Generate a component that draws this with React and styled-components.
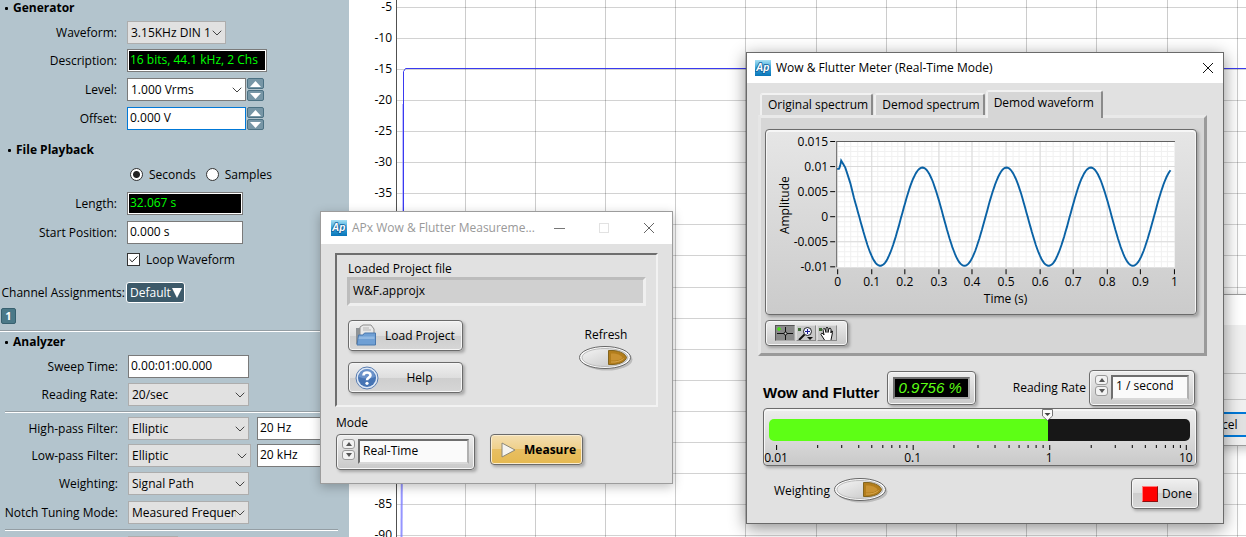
import { useState } from 'react';
import styled, { createGlobalStyle, css } from 'styled-components';
import { ChevronDown, Check } from 'lucide-react';

const GlobalStyle = createGlobalStyle`
  * {
    box-sizing: border-box;
  }
  body {
    margin: 0;
    overflow: hidden;
    background: #ffffff;
  }
  body, button, input, select {
    font-family: "Open Sans", "Noto Sans", sans-serif;
    font-size: 12px;
    line-height: 16px;
    color: #000000;
  }
  button, input, select {
    margin: 0;
    padding: 0;
  }
`;

/* ---------- side panel ---------- */

function Picker({ id, options, width, tone }) {
  return (
    <PickerBox $width={width} $tone={tone}>
      <select id={id}>
        {options.map((option) => (
          <option key={option}>{option}</option>
        ))}
      </select>
      <ChevronDown size={16} strokeWidth={1.5} color="#444444" />
    </PickerBox>
  );
}

function UpDown({ label }) {
  return (
    <Stepper>
      <StepButton aria-label={`${label} up`}>
        <svg width="11" height="6" viewBox="0 0 11 6"><path d="M0 6L5.5 0L11 6Z" fill="#fff" /></svg>
      </StepButton>
      <StepButton aria-label={`${label} down`}>
        <svg width="11" height="6" viewBox="0 0 11 6"><path d="M0 0L5.5 6L11 0Z" fill="#fff" /></svg>
      </StepButton>
    </Stepper>
  );
}

function SettingsPanel() {
  return (
    <Sidebar>
      <SectionTitle>Generator</SectionTitle>
      <Row $gap={0}>
        <label htmlFor="waveform">Waveform:</label>
        <Picker id="waveform" options={['3.15KHz DIN 1']} width={99} />
      </Row>
      <Row $gap={5}>
        <label htmlFor="description">Description:</label>
        <Readout id="description" readOnly value="16 bits, 44.1 kHz, 2 Chs" $width={140} />
      </Row>
      <Row>
        <label htmlFor="level">Level:</label>
        <Inline>
          <Picker id="level" options={['1.000 Vrms']} width={119} tone="white" />
          <UpDown label="Level" />
        </Inline>
      </Row>
      <Row>
        <label htmlFor="offset">Offset:</label>
        <Inline>
          <Field id="offset" defaultValue="0.000 V" $width={119} $active />
          <UpDown label="Offset" />
        </Inline>
      </Row>

      <SectionTitle $indent>File Playback</SectionTitle>
      <Row $gap={0}>
        <span />
        <Choices>
          <label><Radio type="radio" name="unit" defaultChecked />Seconds</label>
          <label><Radio type="radio" name="unit" />Samples</label>
        </Choices>
      </Row>
      <Row>
        <label htmlFor="length">Length:</label>
        <Readout id="length" readOnly value="32.067 s" $width={116} />
      </Row>
      <Row>
        <label htmlFor="start">Start Position:</label>
        <Field id="start" defaultValue="0.000 s" $width={116} />
      </Row>
      <Row $gap={4}>
        <span />
        <TickLabel>
          <TickBox>
            <input type="checkbox" defaultChecked />
            <Check size={11} strokeWidth={2} />
          </TickBox>
          Loop Waveform
        </TickLabel>
      </Row>
      <Row $gap={10} $wide>
        <label htmlFor="channels">Channel Assignments:</label>
        <DefaultButton id="channels">
          Default
          <svg width="10" height="10" viewBox="0 0 10 10"><path d="M0 0H10L5 10Z" fill="#fff" /></svg>
        </DefaultButton>
      </Row>
      <ChannelBadge>1</ChannelBadge>

      <Rule $top={6} $bottom={0} $full />
      <SectionTitle>Analyzer</SectionTitle>
      <AnalyzerRows>
        <Row $gap={0}>
          <label htmlFor="sweep">Sweep Time:</label>
          <Field id="sweep" defaultValue="0.00:01:00.000" $width={121} />
        </Row>
        <Row $gap={5}>
          <label htmlFor="rate">Reading Rate:</label>
          <Picker id="rate" options={['20/sec']} width={121} />
        </Row>
        <Rule $top={5} $bottom={4} />
        <Row $gap={0}>
          <label htmlFor="highpass">High-pass Filter:</label>
          <Inline $gap={8}>
            <Picker id="highpass" options={['Elliptic']} width={121} />
            <Field aria-label="High-pass frequency" defaultValue="20 Hz" $width={78} />
          </Inline>
        </Row>
        <Row $gap={4}>
          <label htmlFor="lowpass">Low-pass Filter:</label>
          <Inline $gap={6}>
            <Picker id="lowpass" options={['Elliptic']} width={123} />
            <Field aria-label="Low-pass frequency" defaultValue="20 kHz" $width={78} />
          </Inline>
        </Row>
        <Row $gap={5}>
          <label htmlFor="weighting">Weighting:</label>
          <Picker id="weighting" options={['Signal Path']} width={121} />
        </Row>
        <Row>
          <label htmlFor="notch">Notch Tuning Mode:</label>
          <Picker id="notch" options={['Measured Frequen']} width={121} />
        </Row>
        <Rule $top={5} $bottom={5} />
        <Row $gap={0}>
          <span />
          <Picker id="more" options={['']} width={50} />
        </Row>
      </AnalyzerRows>
    </Sidebar>
  );
}

/* ---------- level chart ---------- */

const levels = Array.from({ length: 18 }, (_, i) => -5 * (i + 1));
const columns = Array.from({ length: 60 }, (_, i) => 116 + Math.floor(i * 70.2));

function LevelChart() {
  return (
    <ChartArea>
      <svg width="100%" height="100%">
        {levels.map((level, i) => {
          const y = Math.round(7 + i * 31.06) + 0.5;
          return (
            <g key={level}>
              <line x1="48" x2="100%" y1={y} y2={y} stroke="#d2d2d2" />
              <text x="43" y={y + 3.5} textAnchor="end">{level}</text>
            </g>
          );
        })}
        {columns.map((x) => (
          <line key={x} x1={x + 0.5} x2={x + 0.5} y1="0" y2="100%" stroke="#000" strokeOpacity="0.2" />
        ))}
        <line x1="47.5" x2="47.5" y1="0" y2="100%" stroke="#505050" />
        <path d="M53.5 212V104" stroke="#8080ff" strokeOpacity="0.5" fill="none" />
        <path d="M52.5 540L54 212" stroke="#7a7aff" strokeWidth="2" strokeOpacity="0.8" fill="none" />
        <path d="M54.5 212V71.500L56.500 68.500H1600" stroke="#3a3af0" fill="none" />
      </svg>
    </ChartArea>
  );
}

/* ---------- shared dialog parts ---------- */

function AppLogo() {
  return (
    <svg width="16" height="16" viewBox="0 0 16 16" aria-hidden="true">
      <defs>
        <linearGradient id="logoFill" x1="0" y1="0" x2="0" y2="1">
          <stop offset="0" stopColor="#a8e0f4" />
          <stop offset="0.5" stopColor="#35a5da" />
          <stop offset="1" stopColor="#0874b8" />
        </linearGradient>
      </defs>
      <rect width="16" height="16" fill="url(#logoFill)" />
      <text x="1" y="11" fontFamily="Liberation Sans, sans-serif" fontSize="10" fontWeight="700" fontStyle="italic" fill="#fff" stroke="#12609c" strokeWidth="1.600" paintOrder="stroke">Ap</text>
    </svg>
  );
}

function Toggle({ id }) {
  return (
    <ToggleBox>
      <input type="checkbox" id={id} />
      <svg width="54" height="25" viewBox="0 0 54 25">
        <defs>
          <linearGradient id="pillFill" x1="0" y1="0" x2="1" y2="1">
            <stop offset="0" stopColor="#f4f4f4" />
            <stop offset="1" stopColor="#c4c4c4" />
          </linearGradient>
        </defs>
        <ellipse cx="28" cy="13.500" rx="25.500" ry="11" fill="#000" opacity="0.16" />
        <ellipse cx="26" cy="11.500" rx="25.500" ry="11" fill="#fafafa" stroke="#666" />
        <ellipse cx="26" cy="11.500" rx="23" ry="9" fill="url(#pillFill)" stroke="#bbb" />
        <path d="M29.500 4.500H34C42 5 46.500 8.500 47.500 11.500C46.500 15 42 18 34 18.500H29.500Z" fill="#b27d1c" stroke="#83651f" />
        <path d="M32 7.500H35C40 8 42.500 10 43.500 11.500C42 13.500 39 15 32 14.500Z" fill="#c99232" />
        <path d="M32 16H36C40 15.500 43 14 44.500 12.500" fill="none" stroke="#d9a850" />
      </svg>
    </ToggleBox>
  );
}

function RingControl({ id, options, width }) {
  return (
    <Ring $width={width}>
      <RingSteps>
        <button aria-label="Previous"><svg width="6" height="4" viewBox="0 0 6 4"><path d="M0 4L3 0L6 4Z" fill="#555" /></svg></button>
        <button aria-label="Next"><svg width="6" height="4" viewBox="0 0 6 4"><path d="M0 0L3 4L6 0Z" fill="#555" /></svg></button>
      </RingSteps>
      <select id={id}>
        {options.map((option) => (
          <option key={option}>{option}</option>
        ))}
      </select>
    </Ring>
  );
}

function FolderIcon() {
  return (
    <svg width="22" height="23" viewBox="0 0 22 23">
      <path d="M1 4H7V20H1Z" fill="#8f9396" />
      <path d="M5 3L8 1H16L19 5V12H5Z" fill="#e9e9e9" stroke="#8d8d8d" />
      <path d="M8 4H14M8 6H16" stroke="#b5b5b5" />
      <path d="M2 21L3.500 11H8L9.500 9H20.500V21Z" fill="#6f9fd4" stroke="#4b78ad" />
      <path d="M4 12.500H19.500V15H3.500Z" fill="#9fc3e8" opacity="0.7" />
    </svg>
  );
}

function HelpIcon() {
  return (
    <svg width="24" height="24" viewBox="0 0 24 24">
      <circle cx="12" cy="12" r="11" fill="#dfe9f6" stroke="#5a7db0" />
      <circle cx="12" cy="12" r="9" fill="#4674b4" />
      <path d="M4 11A8 8 0 0 1 20 11Q12 14 4 11Z" fill="#7ba0d3" opacity="0.7" />
      <path d="M8.500 9.500C8.500 5.500 15.500 5.500 15.500 9.300C15.500 11.700 12 11.600 12 14.200" fill="none" stroke="#fff" strokeWidth="2.600" />
      <circle cx="12" cy="17.300" r="1.600" fill="#fff" />
    </svg>
  );
}

/* ---------- measurement window ---------- */

function MeasurementWindow() {
  return (
    <Window $left={320} $top={211} $width={353}>
      <TitleBar $height={32} $muted>
        <AppLogo />
        <h2>APx Wow &amp; Flutter Measureme...</h2>
        <WindowButton aria-label="Minimize">
          <svg width="11" height="11"><path d="M0 5.500H11" stroke="#777" /></svg>
        </WindowButton>
        <WindowButton aria-label="Maximize" disabled>
          <svg width="11" height="11"><rect x="0.500" y="0.500" width="9" height="9" fill="none" stroke="#e2e2e2" /></svg>
        </WindowButton>
        <WindowButton aria-label="Close">
          <svg width="12" height="12"><path d="M1 1L11 11M11 1L1 11" stroke="#666" /></svg>
        </WindowButton>
      </TitleBar>
      <MeasureBody>
        <Groove>
          <label htmlFor="project">Loaded Project file</label>
          <SunkenField id="project" readOnly value="W&F.approjx" />
          <ProjectActions>
            <ButtonStack>
              <BevelButton><FolderIcon /><span>Load Project</span></BevelButton>
              <BevelButton $spread><HelpIcon /><span>Help</span></BevelButton>
            </ButtonStack>
            <RefreshBlock>
              <label htmlFor="refresh">Refresh</label>
              <Toggle id="refresh" />
            </RefreshBlock>
          </ProjectActions>
        </Groove>
        <ModeLabel htmlFor="mode">Mode</ModeLabel>
        <ModeRow>
          <RingControl id="mode" options={['Real-Time']} width={139} />
          <BevelButton $gold>
            <svg width="15" height="16" viewBox="0 0 15 16"><path d="M1 1L14 8L1 15Z" fill="#f5f3ee" stroke="#8c8878" /></svg>
            <span>Measure</span>
          </BevelButton>
        </ModeRow>
      </MeasureBody>
    </Window>
  );
}

/* ---------- meter window ---------- */

const plotX = (t) => 71 + t * 336;
const plotY = (v) => 86.5 - v * 5000;

function buildWave() {
  const points = [
    [0, 0.0095], [0.006, 0.0096], [0.009, 0.0102], [0.012, 0.0112],
    [0.018, 0.0105], [0.024, 0.0098], [0.031, 0.0084], [0.039, 0.0067],
  ];
  for (let t = 0.05; t <= 0.992; t += 0.004) {
    points.push([t, 0.0098 * Math.cos(2 * Math.PI * 4 * (t - 0.003))]);
  }
  return points.map(([t, v]) => `${plotX(t).toFixed(1)},${plotY(v).toFixed(1)}`).join(' ');
}

const timeMarks = Array.from({ length: 11 }, (_, i) => i / 10);
const amplitudeMarks = [0.015, 0.01, 0.005, 0, -0.005, -0.01];

function WaveGraph() {
  return (
    <GraphFrame>
      <svg width="100%" viewBox="0 0 429 184">
        <rect x="70" y="11" width="338" height="126" fill="#fff" />
        {Array.from({ length: 51 }, (_, i) => Math.round(71 + i * 6.72) + 0.5).map((x) => (
          <line key={x} x1={x} x2={x} y1="12" y2="137" stroke="#f1f1f1" />
        ))}
        {Array.from({ length: 25 }, (_, i) => 11.5 + i * 5).map((y) => (
          <line key={y} x1="71" x2="408" y1={y} y2={y} stroke="#f1f1f1" />
        ))}
        {timeMarks.map((t) => {
          const x = Math.round(plotX(t)) + 0.5;
          return (
            <g key={t}>
              {t > 0 && t < 1 && <line x1={x} x2={x} y1="12" y2="137" stroke="#dadada" />}
              <line x1={x} x2={x} y1="139" y2="144" stroke="#000" />
              <text x={x} y="156" textAnchor="middle">{t}</text>
            </g>
          );
        })}
        {amplitudeMarks.map((v) => {
          const y = Math.round(plotY(v) - 0.5) + 0.5;
          return (
            <g key={v}>
              {v < 0.015 && v > -0.01 && <line x1="71" x2="408" y1={y} y2={y} stroke="#dadada" />}
              <line x1="64" x2="69" y1={y} y2={y} stroke="#000" />
              <text x="62" y={y + 4} textAnchor="end">{v}</text>
            </g>
          );
        })}
        <path d="M70.500 137V11.500H408" fill="none" stroke="#606060" />
        <polyline points={buildWave()} fill="none" stroke="#0a62a5" strokeWidth="1.900" />
        <text x="239" y="173" textAnchor="middle">Time (s)</text>
        <text transform="translate(23 75) rotate(-90)" textAnchor="middle">Amplitude</text>
      </svg>
    </GraphFrame>
  );
}

function GraphPalette() {
  return (
    <Palette>
      <PaletteButton aria-label="Cursor" $pressed>
        <svg width="18" height="15" viewBox="0 0 18 15">
          <path d="M1 7.500H17M9.500 1V14" stroke="#111" />
          <circle cx="9.500" cy="7.500" r="1.500" fill="#ccc" stroke="#111" />
          <path d="M1 3H5M3 1V5" stroke="#4ae01a" strokeWidth="1.500" />
        </svg>
      </PaletteButton>
      <PaletteButton aria-label="Zoom">
        <svg width="18" height="15" viewBox="0 0 18 15">
          <rect x="1" y="2" width="3" height="3" fill="#3f6b35" />
          <circle cx="10.500" cy="5.500" r="4" fill="#f0f4ff" stroke="#222" />
          <path d="M8 5.500H13M10.500 3V8" stroke="#1a1a90" />
          <path d="M7.500 8.500L2 14" stroke="#111" strokeWidth="2" />
          <path d="M10 11H16L13 14Z" fill="#111" />
        </svg>
      </PaletteButton>
      <PaletteButton aria-label="Pan">
        <svg width="18" height="15" viewBox="0 0 18 15">
          <rect x="1" y="2" width="3" height="3" fill="#3f6b35" />
          <path d="M6.500 14L3 8.500Q3 6.500 5 7.500L6 9L5 3.500Q5.500 1.500 7 3L8 6.500V2Q9 .5 10 2V6.500L11 2.500Q12.500 1.500 13 3V7L13.500 5Q15 4.500 14.500 6.500L13 14" fill="#fff" stroke="#111" />
        </svg>
      </PaletteButton>
    </Palette>
  );
}

const decade = 136.3;
const decades = ['0.01', '0.1', '1', '10'];

function MeterScale() {
  return (
    <MeterPanel>
      <MeterBar type="range" aria-label="Wow and Flutter level" min="0" max="420" defaultValue="279" />
      <MeterThumb width="11" height="12" viewBox="0 0 11 12">
        <path d="M0.500 0.500H10.500V7L5.500 11.500L0.500 7Z" fill="#fafafa" stroke="#777" />
        <path d="M2.500 4H8.500L5.500 7Z" fill="#444" />
      </MeterThumb>
      <svg width="100%" viewBox="0 0 431 24">
        {decades.map((name, i) => (
          <g key={name}>
            <line x1={12.5 + i * decade} x2={12.5 + i * decade} y1="4" y2="9" stroke="#000" />
            <text x={12 + i * decade} y="21" textAnchor="middle">{name}</text>
            {i < 3 && [2, 3, 4, 5, 6, 7, 8, 9].map((n) => {
              const x = Math.round(12 + decade * (i + Math.log10(n))) + 0.5;
              return <line key={n} x1={x} x2={x} y1="4" y2="7" stroke="#000" />;
            })}
          </g>
        ))}
      </svg>
    </MeterPanel>
  );
}

const tabs = ['Original spectrum', 'Demod spectrum', 'Demod waveform'];

function MeterWindow() {
  const [tab, setTab] = useState(tabs[2]);

  return (
    <Window $left={746} $top={52} $width={478} $dark>
      <TitleBar $height={30}>
        <AppLogo />
        <h2>Wow &amp; Flutter Meter (Real-Time Mode)</h2>
        <WindowButton aria-label="Close">
          <svg width="12" height="12"><path d="M1 1L11 11M11 1L1 11" stroke="#111" /></svg>
        </WindowButton>
      </TitleBar>
      <MeterBody>
        <TabList role="tablist">
          {tabs.map((name) => (
            <Tab key={name} role="tab" aria-selected={name === tab} $active={name === tab} onClick={() => setTab(name)}>
              {name}
            </Tab>
          ))}
        </TabList>
        <TabPanel>
          <WaveGraph />
          <GraphPalette />
        </TabPanel>
        <ReadingRow>
          <h3>Wow and Flutter</h3>
          <ValueFrame><output>0.9756 %</output></ValueFrame>
          <RateBlock>
            <label htmlFor="meter-rate">Reading Rate</label>
            <RingControl id="meter-rate" options={['1 / second']} width={106} />
          </RateBlock>
        </ReadingRow>
        <MeterScale />
        <FooterRow>
          <WeightingBlock>
            <label htmlFor="meter-weighting">Weighting</label>
            <Toggle id="meter-weighting" />
          </WeightingBlock>
          <BevelButton $compact><StopSquare /><span>Done</span></BevelButton>
        </FooterRow>
      </MeterBody>
    </Window>
  );
}

function BackWindow() {
  return (
    <Window $left={1060} $top={294} $width={240}>
      <TitleBar $height={30} />
      <BackBody>
        <BackField />
        <CancelButton>Cancel</CancelButton>
      </BackBody>
    </Window>
  );
}

export default function App() {
  return (
    <Desktop>
      <GlobalStyle />
      <SettingsPanel />
      <LevelChart />
      <BackWindow />
      <MeasurementWindow />
      <MeterWindow />
    </Desktop>
  );
}

const Desktop = styled.main`
  position: relative;
  display: flex;
  height: 100vh;
  overflow: hidden;
`;

const Sidebar = styled.section`
  flex: 0 0 349px;
  margin-top: -2px;
  background: #b3c4cd;
`;

const SectionTitle = styled.h2`
  display: flex;
  align-items: center;
  height: 20px;
  margin: ${({ $indent }) => ($indent ? '10px 0 3px 8px' : '0 0 3px 5px')};
  font-size: 12px;
  font-weight: 700;

  &::before {
    content: '';
    width: 3px;
    height: 3px;
    margin-right: 5px;
    border-radius: 1px;
    background: #000000;
  }
`;

const Row = styled.div`
  display: grid;
  grid-template-columns: ${({ $wide }) => ($wide ? '125px' : '117px')} auto;
  column-gap: ${({ $wide }) => ($wide ? '1px' : '10px')};
  align-items: center;
  justify-content: start;
  height: 23px;
  margin-top: ${({ $gap = 6 }) => $gap}px;

  > label:first-child {
    justify-self: end;
    white-space: nowrap;
  }
`;

const AnalyzerRows = styled.div`
  padding-left: 1px;
`;

const Inline = styled.div`
  display: flex;
  gap: ${({ $gap = 1 }) => $gap}px;
`;

const PickerBox = styled.div`
  display: grid;
  align-items: center;
  width: ${({ $width }) => $width}px;
  height: 23px;
  border: 1px solid ${({ $tone }) => ($tone ? '#7a7a7a' : '#adadad')};
  background: ${({ $tone }) => $tone || '#e1e1e1'};

  select {
    grid-area: 1 / 1;
    width: 100%;
    height: 21px;
    padding: 0 12px 0 3px;
    border: 0;
    background: transparent;
    appearance: none;
  }

  svg {
    grid-area: 1 / 1;
    justify-self: end;
    pointer-events: none;
  }
`;

const Field = styled.input`
  width: ${({ $width }) => $width}px;
  height: 23px;
  padding: 0 2px 2px;
  border: 1px solid ${({ $active }) => ($active ? '#0078d7' : '#7a7a7a')};
  background: #ffffff;
`;

const Readout = styled(Field)`
  border-color: #7a7a7a;
  background: #000000;
  color: #00ff00;
  box-shadow: inset 0 0 0 1px #ffffff;
`;

const Stepper = styled.div`
  display: grid;
  gap: 1px;
  width: 17px;
`;

const StepButton = styled.button`
  display: grid;
  place-items: center;
  height: 11px;
  border: 1px solid #4c7183;
  border-radius: 2px;
  background: #7796a6;
`;

const Choices = styled.div`
  display: flex;
  gap: 10px;
  padding-left: 3px;

  label {
    display: flex;
    align-items: center;
    gap: 6px;
  }
`;

const Radio = styled.input`
  width: 13px;
  height: 13px;
  border: 1px solid #333333;
  border-radius: 50%;
  background: #ffffff;
  appearance: none;

  &:checked {
    background: radial-gradient(circle, #222222 3px, #ffffff 4px);
  }
`;

const TickLabel = styled.label`
  display: flex;
  align-items: center;
  gap: 6px;
`;

const TickBox = styled.span`
  display: grid;
  place-items: center;

  input {
    grid-area: 1 / 1;
    width: 13px;
    height: 13px;
    border: 1px solid #333333;
    background: #ffffff;
    appearance: none;
  }

  svg {
    grid-area: 1 / 1;
    pointer-events: none;
  }
`;

const DefaultButton = styled.button`
  display: flex;
  align-items: center;
  gap: 1px;
  height: 21px;
  padding: 0 2px 0 3px;
  border: 1px solid #ffffff;
  border-radius: 3px;
  background: #3d5a6a;
  color: #ffffff;
`;

const ChannelBadge = styled.button`
  display: block;
  width: 15px;
  height: 16px;
  margin: 4px 0 0 1px;
  border: 1px solid #37606f;
  border-radius: 2px;
  background: #4b7988;
  color: #ffffff;
  font-size: 11px;
  font-weight: 700;
  line-height: 14px;
`;

const Rule = styled.hr`
  height: 2px;
  margin: ${({ $top, $bottom, $full }) => `${$top}px ${$full ? 0 : 11}px ${$bottom}px ${$full ? 0 : 4}px`};
  border: 0;
  border-top: 1px solid #949ea4;
  background: #ffffff;
`;

const ChartArea = styled.section`
  flex: 1;
  background: #ffffff;

  svg {
    display: block;
  }
`;

const Window = styled.section`
  position: absolute;
  left: ${({ $left }) => $left}px;
  top: ${({ $top }) => $top}px;
  width: ${({ $width }) => $width}px;
  border: 1px solid ${({ $dark }) => ($dark ? '#6a6a6a' : '#9c9c9c')};
  background: #e1e1e1;
  box-shadow: ${({ $dark }) => ($dark ? '0 4px 16px rgba(0, 0, 0, 0.45)' : '0 3px 10px rgba(0, 0, 0, 0.25)')};
`;

const TitleBar = styled.header`
  display: flex;
  align-items: center;
  height: ${({ $height }) => $height}px;
  padding: 0 9px 0 8px;
  background: #ffffff;

  ${({ $muted }) => $muted && css`
    padding: 0 17px 0 10px;
    color: #999999;
  `}

  h2 {
    flex: 1;
    margin: 0 0 0 5px;
    font-size: 12px;
    font-weight: 400;
    white-space: nowrap;
  }
`;

const WindowButton = styled.button`
  display: grid;
  place-items: center;
  width: 12px;
  height: 20px;
  border: 0;
  background: transparent;

  & + & {
    margin-left: 33px;
  }
`;

const MeasureBody = styled.div`
  padding: 9px 14px 13px;
`;

const Groove = styled.div`
  padding: 6px 10px 12px;
  border: 2px solid;
  border-color: #6e6e6e #f2f2f2 #f2f2f2 #6e6e6e;

  > label {
    display: block;
    margin-left: 1px;
  }
`;

const SunkenField = styled.input`
  display: block;
  width: 100%;
  height: 29px;
  padding: 0 3px 3px;
  border: 3px solid;
  border-color: #bcbcbc #efefef #efefef #bcbcbc;
  background: #d0d0d0;
`;

const ProjectActions = styled.div`
  display: flex;
  justify-content: space-between;
  padding: 14px 13px 0 1px;
`;

const ButtonStack = styled.div`
  display: grid;
  gap: 11px;
  width: 115px;
`;

const BevelButton = styled.button`
  display: flex;
  align-items: center;
  gap: 8px;
  height: 31px;
  padding: 0 6px;
  border: 1px solid #6b6b6b;
  border-radius: 4px;
  background: linear-gradient(#f0f0f0, #dedede 50%, #cecece 50%, #d6d6d6);
  box-shadow: inset 0 0 0 1px #f6f6f6, 2px 2px 3px rgba(0, 0, 0, 0.25);
  white-space: nowrap;

  ${({ $spread }) => $spread && css`
    span {
      flex: 1;
      padding-right: 4px;
    }
  `}

  ${({ $compact }) => $compact && css`
    gap: 4px;
    padding: 0 6px 0 10px;
  `}

  ${({ $gold }) => $gold && css`
    gap: 8px;
    padding: 0 6px 0 10px;
    background: linear-gradient(#f3deb0, #efd08a 50%, #e8bf62 50%, #e5b850);
    box-shadow: inset 0 0 0 1px #f9ecd0, 2px 2px 3px rgba(0, 0, 0, 0.25);
    font-weight: 700;
  `}
`;

const RefreshBlock = styled.div`
  display: grid;
  justify-items: center;
  align-content: start;
  gap: 3px;
  padding-top: 7px;
`;

const ToggleBox = styled.span`
  display: grid;

  input {
    grid-area: 1 / 1;
    width: 52px;
    height: 23px;
    opacity: 0;
  }

  svg {
    grid-area: 1 / 1;
    pointer-events: none;
  }
`;

const ModeLabel = styled.label`
  display: block;
  margin: 8px 0 3px 1px;
`;

const ModeRow = styled.div`
  display: flex;
  gap: 15px;
  padding-left: 1px;
`;

const Ring = styled.div`
  display: flex;
  gap: 3px;
  width: ${({ $width }) => $width}px;
  height: 36px;
  padding: 4px 5px 5px;
  border: 1px solid #6b6b6b;
  border-radius: 4px;
  background: linear-gradient(#ededed, #c9c9c9);
  box-shadow: inset 0 0 0 1px #f6f6f6, 2px 2px 3px rgba(0, 0, 0, 0.25);

  select {
    flex: 1;
    min-width: 0;
    padding: 0 3px 2px;
    border: 2px solid;
    border-color: #6e6e6e #b0b0b0 #d8d8d8 #6e6e6e;
    border-radius: 0;
    background: #fafafa;
    appearance: none;
  }
`;

const RingSteps = styled.div`
  display: grid;
  align-content: start;
  gap: 1px;

  button {
    display: grid;
    place-items: center;
    width: 13px;
    height: 10px;
    border: 1px solid #999999;
    border-radius: 3px;
    background: #f2f2f2;
  }
`;

const MeterBody = styled.div`
  padding: 7px 16px 14px 11px;
`;

const TabList = styled.div`
  display: flex;
  align-items: flex-end;
  gap: 1px;
  height: 25px;
  padding-left: 2px;
`;

const Tab = styled.button`
  height: 22px;
  padding: 0 3px 1px 6px;
  border: 2px solid;
  border-color: #f2f2f2 #8a8a8a transparent #f0f0f0;
  border-bottom: 0;
  border-radius: 3px 3px 0 0;
  background: #d6d6d6;
  white-space: nowrap;

  ${({ $active }) => $active && css`
    height: 28px;
    margin-bottom: -3px;
    padding: 0 7px 4px 6px;
    z-index: 1;
  `}
`;

const TabPanel = styled.div`
  padding: 11px 7px 7px 4px;
  border: 3px solid;
  border-color: #e9e9e9 #9a9a9a #9a9a9a #e6e6e6;
  background: #d6d6d6;
`;

const GraphFrame = styled.div`
  border: 1px solid #6b6b6b;
  border-radius: 4px;
  background: linear-gradient(#e6e6e6, #cbcbcb);
  box-shadow: inset 0 1px 0 1px #f6f6f6, 2px 2px 3px rgba(0, 0, 0, 0.25);

  svg {
    display: block;
  }
`;

const Palette = styled.div`
  display: flex;
  gap: 1px;
  width: 83px;
  height: 26px;
  margin-top: 5px;
  padding: 4px 9px;
  border: 1px solid #6b6b6b;
  border-radius: 4px;
  background: linear-gradient(#ededed, #c9c9c9);
  box-shadow: inset 0 0 0 1px #f6f6f6, 2px 2px 3px rgba(0, 0, 0, 0.25);
`;

const PaletteButton = styled.button`
  width: 20px;
  height: 16px;
  overflow: hidden;
  border: 1px solid;
  border-color: ${({ $pressed }) => ($pressed ? '#555555 #aaaaaa #aaaaaa #555555' : '#dddddd #8a8a8a #8a8a8a #dddddd')};
  background: ${({ $pressed }) => ($pressed ? '#8a8a8a' : '#c8c8c8')};

  svg {
    display: block;
  }
`;

const ReadingRow = styled.div`
  display: flex;
  align-items: center;
  gap: 8px;
  height: 37px;
  margin: 13px 12px 0 5px;

  h3 {
    align-self: flex-end;
    margin: 0;
    font-family: "Liberation Sans", Arial, sans-serif;
    font-size: 15px;
    font-weight: 700;
    line-height: 26px;
    white-space: nowrap;
  }
`;

const ValueFrame = styled.div`
  padding: 5px;
  border: 1px solid #6b6b6b;
  border-radius: 4px;
  background: linear-gradient(#ededed, #c9c9c9);
  box-shadow: inset 0 0 0 1px #f6f6f6, 2px 2px 3px rgba(0, 0, 0, 0.25);

  output {
    display: block;
    width: 77px;
    padding-left: 3px;
    border: 2px solid;
    border-color: #6e6e6e #a8a8a8 #a8a8a8 #6e6e6e;
    background: #000000;
    color: #5dff15;
    font-family: "Liberation Sans", Arial, sans-serif;
    font-size: 15px;
    font-style: italic;
    line-height: 18px;
  }
`;

const RateBlock = styled.div`
  display: flex;
  align-items: center;
  gap: 3px;
  margin-left: auto;
`;

const MeterPanel = styled.div`
  position: relative;
  margin: 2px 10px 0 5px;
  padding-top: 10px;
  border: 1px solid #6b6b6b;
  border-radius: 4px;
  background: linear-gradient(#ededed, #c9c9c9);
  box-shadow: inset 0 1px 0 1px #f6f6f6, 2px 2px 3px rgba(0, 0, 0, 0.25);

  svg {
    display: block;
  }
`;

const MeterBar = styled.input`
  display: block;
  width: calc(100% - 11px);
  height: 22px;
  margin-left: 5px;
  border-radius: 5px;
  background: linear-gradient(90deg, #5dff15 279px, #171717 279px);
  appearance: none;

  &::-webkit-slider-thumb {
    width: 10px;
    height: 22px;
    opacity: 0;
    appearance: none;
  }
`;

const MeterThumb = styled.svg`
  position: absolute;
  left: 278px;
  top: 0;
  pointer-events: none;
`;

const FooterRow = styled.div`
  display: flex;
  align-items: flex-start;
  justify-content: space-between;
  margin: 12px 8px 0 16px;
`;

const WeightingBlock = styled.div`
  display: flex;
  align-items: center;
  gap: 4px;
`;

const StopSquare = styled.i`
  width: 16px;
  height: 16px;
  border: 1px solid;
  border-color: #ff7b7b #8a1010 #8a1010 #ff7b7b;
  background: #ff0000;
`;

const BackBody = styled.div`
  display: flex;
  flex-direction: column;
  align-items: flex-end;
  padding: 48px 0 8px;
  background: #f0f0f0;
`;

const BackField = styled.div`
  width: 100%;
  height: 27px;
  border: 1px solid #c4c4c4;
`;

const CancelButton = styled.button`
  width: 100px;
  height: 25px;
  margin: 12px 30px 0 0;
  border: 2px solid #0078d7;
  background: #e1e1e1;
`;
